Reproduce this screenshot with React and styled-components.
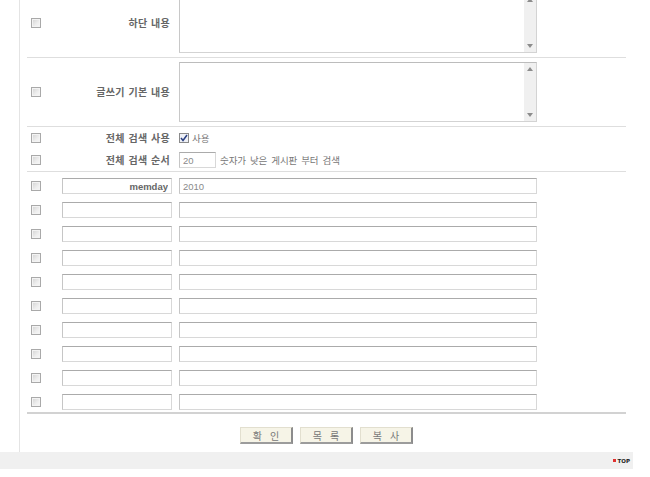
import React from 'react';
import styled, { createGlobalStyle } from 'styled-components';

const Global = createGlobalStyle`
  html, body { margin: 0; padding: 0; background: #fff; }
  body { font-family: "Noto Sans CJK KR", "Liberation Sans", sans-serif; overflow: hidden; }
`;

const Page = styled.div`
  width: 633px;
`;

const Main = styled.div`
  margin: -11px 0 0 19px;
  border-left: 1px solid #e4e4e4;
  padding: 0 7px 8px 7px;
`;

const Table = styled.div`
  width: 599px;
`;

const Row = styled.div`
  display: grid;
  grid-template-columns: 31px 117px 1fr;
  align-items: center;
  height: ${(p) => p.$h}px;
  border-bottom: ${(p) => (p.$line ? '1px solid #dedede' : 'none')};
`;

const FieldRow = styled.div`
  display: grid;
  grid-template-columns: 31px 117px 1fr;
  align-items: center;
  height: 24px;
  box-sizing: border-box;
  padding: 6px 0 2px;
`;

const Cell = styled.div`
  display: flex;
  align-items: center;
  padding-left: 4px;
`;

const Box = styled.span`
  display: inline-block;
  width: 10px;
  height: 10px;
  box-sizing: border-box;
  border: 1px solid #a9a9a9;
  background: linear-gradient(135deg, #d2d2d2 0%, #eeeeee 60%, #f8f8f8 100%);
  box-shadow: inset 0 0 0 1px #f3f3f3;
`;

const CheckedBox = styled.span`
  display: inline-flex;
  align-items: center;
  justify-content: center;
  width: 10px;
  height: 10px;
  box-sizing: border-box;
  border: 1px solid #8a8a8a;
  background: #eef0f6;
`;

const Label = styled.div`
  text-align: right;
  padding-right: 5px;
  font-size: 10px;
  font-weight: bold;
  color: #666;
  letter-spacing: 0.3px;
  word-spacing: 1px;
  white-space: nowrap;
  line-height: 12px;
`;

const TextBox = styled.div`
  display: flex;
  width: 358px;
  height: 60px;
  box-sizing: border-box;
  border: 1px solid #d3d3d3;
  border-top-color: #bcbcbc;
  border-left-color: #c8c8c8;
  background: #fff;
`;

const TextArea = styled.textarea`
  flex: 1;
  border: 0;
  margin: 0;
  padding: 2px;
  resize: none;
  outline: none;
  overflow: hidden;
  background: transparent;
`;

const ScrollBar = styled.div`
  width: 12px;
  background: #f0f0f0;
  display: flex;
  flex-direction: column;
  justify-content: space-between;
  align-items: center;
  padding: 4px 0;
  box-sizing: border-box;
`;

const Inline = styled.div`
  display: flex;
  align-items: center;
  gap: ${(p) => p.$gap || 4}px;
  padding-left: 4px;
`;

const Note = styled.span`
  font-size: 9.5px;
  color: #777;
  letter-spacing: -0.1px;
  word-spacing: 2px;
  white-space: nowrap;
`;

const Field = styled.input`
  box-sizing: border-box;
  height: 16px;
  width: ${(p) => p.$w}px;
  margin: 0 0 0 ${(p) => p.$ml || 0}px;
  border: 1px solid #d8d8d8;
  border-top-color: #ababab;
  border-left-color: #c6c6c6;
  padding: 0 3px;
  font-family: "Liberation Sans", Arial, sans-serif;
  font-size: 9.5px;
  font-weight: ${(p) => (p.$bold ? 'bold' : 'normal')};
  color: ${(p) => (p.$bold ? '#666' : '#8a8a8a')};
  text-align: ${(p) => (p.$right ? 'right' : 'left')};
  outline: none;
  background: #fff;
`;

const ThickLine = styled.div`
  height: 2px;
  background: #d2d2d2;
`;

const Buttons = styled.div`
  display: flex;
  justify-content: center;
  gap: 7px;
  padding-top: 13px;
`;

const Btn = styled.button`
  width: 53px;
  height: 17px;
  box-sizing: border-box;
  padding: 0;
  background: #f6f4e7;
  border: 1px solid #e2dfcf;
  border-right: 2px solid #8c8c8c;
  border-bottom: 2px solid #9c9c9c;
  font-family: "Noto Sans CJK KR", sans-serif;
  font-size: 10px;
  line-height: 13px;
  color: #777;
  word-spacing: 6px;
  cursor: pointer;
`;

const Footer = styled.div`
  height: 17px;
  background: #f0f0f0;
  display: flex;
  align-items: center;
  justify-content: flex-end;
  padding-right: 3px;
`;

const Top = styled.span`
  display: flex;
  align-items: center;
  gap: 2px;
  font-family: "DejaVu Sans", sans-serif;
  font-size: 5.5px;
  font-weight: bold;
  color: #222;
`;

const Dot = styled.span`
  width: 3px;
  height: 3px;
  background: #e03030;
`;

const Arrow = ({ up }) => (
  <svg width="6" height="4" viewBox="0 0 6 4">
    <path d={up ? 'M0 4 L3 0 L6 4 Z' : 'M0 0 L3 4 L6 0 Z'} fill="#8c8c8c" />
  </svg>
);

const Check = () => (
  <svg width="8" height="8" viewBox="0 0 8 8">
    <path d="M1 4 L3 6.5 L7 1" stroke="#2a3f80" strokeWidth="1.5" fill="none" />
  </svg>
);

const TextRow = ({ label }) => (
  <Row $h={68} $line>
    <Cell><Box /></Cell>
    <Label>{label}</Label>
    <Inline>
      <TextBox>
        <TextArea readOnly defaultValue="" />
        <ScrollBar>
          <Arrow up />
          <Arrow />
        </ScrollBar>
      </TextBox>
    </Inline>
  </Row>
);

const fields = [
  { key: 'memday', value: '2010' },
  ...Array.from({ length: 9 }, () => ({ key: '', value: '' })),
];

export default function App() {
  return (
    <Page>
      <Global />
      <Main>
        <Table>
          <TextRow label="하단 내용" />
          <TextRow label="글쓰기 기본 내용" />
          <Row $h={22}>
            <Cell><Box /></Cell>
            <Label>전체 검색 사용</Label>
            <Inline $gap={3}>
              <CheckedBox><Check /></CheckedBox>
              <Note>사용</Note>
            </Inline>
          </Row>
          <Row $h={22} $line>
            <Cell><Box /></Cell>
            <Label>전체 검색 순서</Label>
            <Inline $gap={4}>
              <Field $w={37} readOnly defaultValue="20" />
              <Note>숫자가 낮은 게시판 부터 검색</Note>
            </Inline>
          </Row>
          {fields.map((f, i) => (
            <FieldRow key={i}>
              <Cell><Box /></Cell>
              <Field $w={110} $ml={4} $bold $right readOnly defaultValue={f.key} />
              <Field $w={358} $ml={4} readOnly defaultValue={f.value} />
            </FieldRow>
          ))}
          <ThickLine />
          <Buttons>
            <Btn>확 인</Btn>
            <Btn>목 록</Btn>
            <Btn>복 사</Btn>
          </Buttons>
        </Table>
      </Main>
      <Footer>
        <Top><Dot />TOP</Top>
      </Footer>
    </Page>
  );
}
